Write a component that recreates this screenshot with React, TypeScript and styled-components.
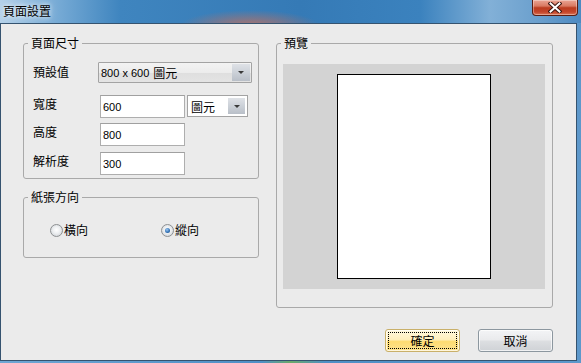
import React from 'react';
import styled, { createGlobalStyle } from 'styled-components';

const GlobalStyle = createGlobalStyle`
  html, body {
    margin: 0;
    padding: 0;
    background: #4d8ec6;
  }
  * {
    box-sizing: border-box;
  }
`;

const cjk = `"Noto Sans CJK TC", "Noto Sans CJK SC", sans-serif`;
const latin = `"Liberation Sans", "Noto Sans CJK TC", sans-serif`;

const Window = styled("div")({
  width: 581,
  height: 363,
  display: "flex",
  flexDirection: "column",
  fontFamily: cjk,
  fontSize: 12,
  color: "#000",
  background:
    "linear-gradient(90deg, #6fa6d3 0%, #4f8fc6 45%, #6aa86a 50%, #4f8fc6 56%, #5d98cb 100%)",
});

const TitleBar = styled("div")({
  height: 23,
  flex: "0 0 23px",
  display: "flex",
  justifyContent: "space-between",
  alignItems: "flex-start",
  padding: "4px 3px 0 3px",
  background: `radial-gradient(ellipse 70px 16px at 250px 26px, rgba(196, 112, 92, 0.85), rgba(196, 112, 92, 0) 100%),
    linear-gradient(90deg, #b4d1e9 0px, #79acd6 55px, #3f85bf 120px, #357ab6 300px, #3b82be 420px, #82b0d7 490px, #6a9fcd 540px, #4c8ac2 581px)`,
});

const Title = styled("span")({
  lineHeight: "14px",
  fontSize: 12,
  color: "#000",
  textShadow: "0 0 4px rgba(255,255,255,0.9), 0 0 8px rgba(255,255,255,0.6)",
});

const CloseButton = styled("div")({
  width: 46,
  height: 16,
  marginTop: -4,
  border: "1px solid #5b1d12",
  borderTop: "none",
  borderRadius: "0 0 4px 4px",
  background:
    "linear-gradient(180deg, #eaa594 0%, #d97a62 40%, #bb3c1f 52%, #c4452a 80%, #dc7556 100%)",
  boxShadow: "inset 0 0 0 1px rgba(255,255,255,0.35)",
  display: "flex",
  alignItems: "center",
  justifyContent: "center",
});

const Client = styled("div")({
  flex: 1,
  margin: "0 4px 2px 0",
  border: "1px solid #35536f",
  background: "#ebebeb",
  padding: "12px 23px 0 22px",
  display: "flex",
  flexDirection: "column",
});

const Main = styled("div")({
  display: "grid",
  gridTemplateColumns: "236px 277px",
  columnGap: 17,
  alignItems: "start",
});

const Column = styled("div")({
  display: "flex",
  flexDirection: "column",
  gap: 11,
});

const Group = styled("fieldset")<{ $h: number }>(({ $h }) => ({
  margin: 0,
  padding: 0,
  minWidth: 0,
  height: $h,
  border: "1px solid #a9a9a9",
  borderRadius: 3,
}));

const Legend = styled("legend")({
  marginLeft: 4,
  padding: "0 3px",
  lineHeight: "14px",
  fontSize: 12,
});

const Form = styled("div")({
  display: "flex",
  flexDirection: "column",
  padding: "12px 0 0 9px",
});

const Row = styled("div")<{ $top?: number }>(({ $top = 0 }) => ({
  display: "flex",
  alignItems: "flex-start",
  marginTop: $top,
}));

const Label = styled("span")<{ $w: number; $pt?: number }>(({ $w, $pt = 0 }) => ({
  width: $w,
  flex: `0 0 ${$w}px`,
  lineHeight: "14px",
  paddingTop: $pt,
  whiteSpace: "nowrap",
}));

const Combo = styled("div")<{ $w: number; $h: number; $flat?: boolean; $ml?: number }>(
  ({ $w, $h, $flat, $ml = 0 }) => ({
    width: $w,
    height: $h,
    marginLeft: $ml,
    position: "relative",
    border: "1px solid #a3a3a3",
    borderRadius: $flat ? 0 : 1,
    background: $flat
      ? "#fff"
      : "linear-gradient(180deg, #f3f3f3 0%, #ececec 50%, #dedede 51%, #e4e4e4 100%)",
    display: "flex",
    alignItems: "center",
    paddingLeft: $flat ? 3 : 2,
    fontFamily: latin,
    fontSize: 11,
    whiteSpace: "nowrap",
  })
);

const CjkText = styled("span")<{ $ml?: number }>(({ $ml = 4 }) => ({
  fontFamily: cjk,
  fontSize: 12,
  marginLeft: $ml,
}));

const ArrowBox = styled("span")<{ $inset: number; $w: number }>(({ $inset, $w }) => ({
  position: "absolute",
  top: $inset,
  bottom: $inset,
  right: $inset,
  width: $w,
  background: "linear-gradient(180deg, #dfe2e7 0%, #ccd1d8 50%, #b9bfc8 100%)",
  display: "flex",
  alignItems: "center",
  justifyContent: "center",
  "&::after": {
    content: '""',
    borderLeft: "3px solid transparent",
    borderRight: "3px solid transparent",
    borderTop: "3px solid #3a3a3a",
  },
}));

const Input = styled("input")<{ $w: number }>(({ $w }) => ({
  width: $w,
  height: 23,
  border: "1px solid #aeaeae",
  borderTopColor: "#a0a0a0",
  background: "#fff",
  padding: "0 0 0 2px",
  margin: 0,
  fontFamily: latin,
  fontSize: 11,
  color: "#000",
  outline: "none",
}));

const RadioRow = styled("div")({
  display: "flex",
  padding: "19px 0 0 26px",
});

const RadioItem = styled("label")<{ $w?: number }>(({ $w }) => ({
  display: "flex",
  alignItems: "center",
  width: $w ?? "auto",
  lineHeight: "14px",
  gap: 1,
}));

const RadioDot = styled("span")<{ $on?: boolean }>(({ $on }) => ({
  width: 13,
  height: 13,
  borderRadius: "50%",
  border: "1px solid #8d9092",
  background: "radial-gradient(circle at 50% 45%, #ffffff 0%, #eef0f2 40%, #c9cdd1 100%)",
  display: "flex",
  alignItems: "center",
  justifyContent: "center",
  "&::after": $on
    ? {
        content: '""',
        width: 5,
        height: 5,
        borderRadius: "50%",
        background: "radial-gradient(circle at 40% 35%, #9cc8f2 0%, #2f6fb3 60%, #18467e 100%)",
      }
    : {},
}));

const PreviewArea = styled("div")({
  margin: "14px 0 0 6px",
  width: 262,
  height: 225,
  background: "#d3d3d3",
  display: "flex",
  alignItems: "center",
  justifyContent: "center",
});

const Page = styled("div")({
  width: 154,
  height: 205,
  background: "#fff",
  border: "1px solid #000",
});

const ButtonRow = styled("div")({
  display: "flex",
  justifyContent: "flex-end",
  gap: 18,
  marginTop: 21,
});

const Button = styled("button")<{ $primary?: boolean }>(({ $primary }) => ({
  width: 75,
  height: 23,
  margin: 0,
  padding: 0,
  position: "relative",
  fontFamily: cjk,
  fontSize: 12,
  color: "#000",
  borderRadius: 3,
  border: $primary ? "1px solid #c9b06a" : "1px solid #8c979f",
  background: $primary
    ? "linear-gradient(180deg, #fff8de 0%, #ffefbd 45%, #fedc72 55%, #fde28f 100%)"
    : "linear-gradient(180deg, #f3f4f6 0%, #eaebed 45%, #dcdee1 55%, #cfd2d6 100%)",
  boxShadow: "inset 0 0 0 1px rgba(255,255,255,0.7)",
  "&::after": $primary
    ? {
        content: '""',
        position: "absolute",
        inset: 2,
        border: "1px dotted #000",
      }
    : {},
}));

const App: React.FC = () => {
  return (
    <Window>
      <GlobalStyle />
      <TitleBar>
        <Title>頁面設置</Title>
        <CloseButton>
          <svg width="14" height="11" viewBox="0 0 14 11">
            <path d="M2.5 1.5 L11.5 9.5 M11.5 1.5 L2.5 9.5" stroke="#3b1510" strokeWidth="4" strokeLinecap="square" />
            <path d="M2.5 1.5 L11.5 9.5 M11.5 1.5 L2.5 9.5" stroke="#ffffff" strokeWidth="2" strokeLinecap="square" />
          </svg>
        </CloseButton>
      </TitleBar>
      <Client>
        <Main>
          <Column>
            <Group $h={143}>
              <Legend>頁面尺寸</Legend>
              <Form>
                <Row>
                  <Label $w={65} $pt={3}>預設值</Label>
                  <Combo $w={154} $h={21}>
                    800 x 600<CjkText>圖元</CjkText>
                    <ArrowBox $inset={1} $w={18} />
                  </Combo>
                </Row>
                <Row $top={12}>
                  <Label $w={67} $pt={2}>寬度</Label>
                  <Input $w={85} defaultValue="600" />
                  <Combo $w={61} $h={22} $flat $ml={2}>
                    <CjkText $ml={0}>圖元</CjkText>
                    <ArrowBox $inset={2} $w={17} />
                  </Combo>
                </Row>
                <Row $top={5}>
                  <Label $w={67} $pt={2}>高度</Label>
                  <Input $w={85} defaultValue="800" />
                </Row>
                <Row $top={6}>
                  <Label $w={67} $pt={2}>解析度</Label>
                  <Input $w={85} defaultValue="300" />
                </Row>
              </Form>
            </Group>
            <Group $h={68}>
              <Legend>紙張方向</Legend>
              <RadioRow>
                <RadioItem $w={111}>
                  <RadioDot />
                  橫向
                </RadioItem>
                <RadioItem>
                  <RadioDot $on />
                  縱向
                </RadioItem>
              </RadioRow>
            </Group>
          </Column>
          <Group $h={272}>
            <Legend>預覽</Legend>
            <PreviewArea>
              <Page />
            </PreviewArea>
          </Group>
        </Main>
        <ButtonRow>
          <Button $primary>確定</Button>
          <Button>取消</Button>
        </ButtonRow>
      </Client>
    </Window>
  );
};

export default App;
